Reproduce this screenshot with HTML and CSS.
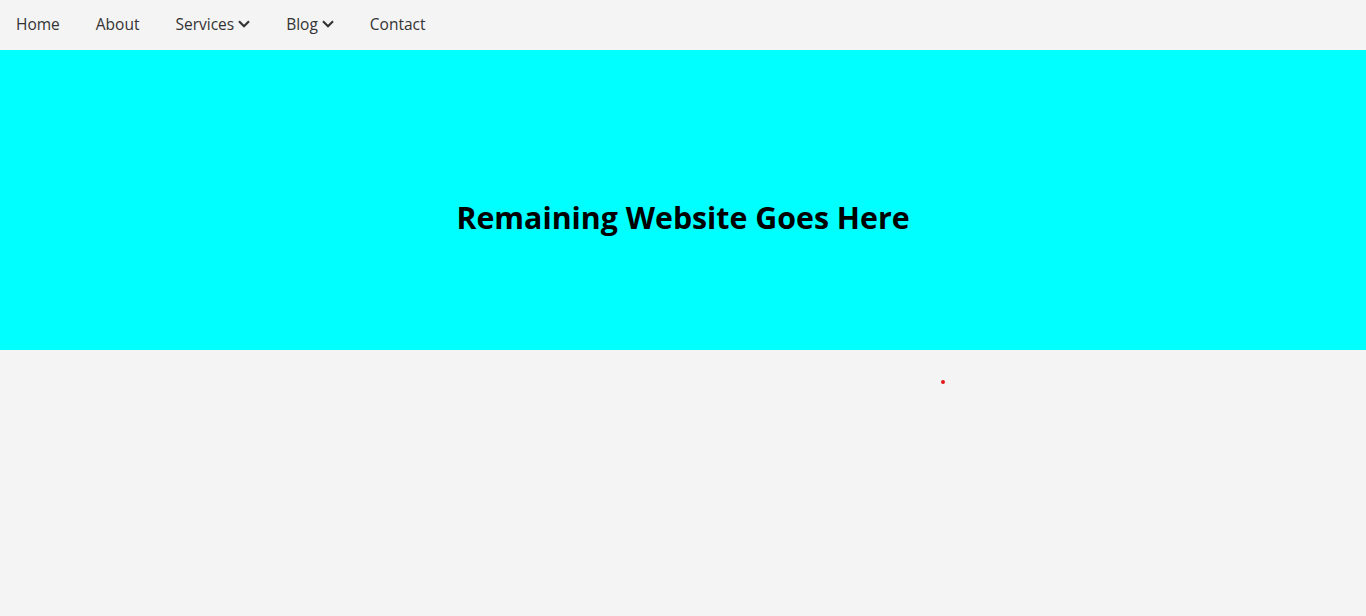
FILE: index.html
```html
<!DOCTYPE html>
<html>
<head>
<meta charset="utf-8">
<link rel="stylesheet" href="styles.css">
</head>
<body>
<nav class="nav">
  <a class="nav-item" href="#">Home</a>
  <a class="nav-item" href="#">About</a>
  <a class="nav-item" href="#">Services <svg class="chev" viewBox="0 0 12 8" width="12" height="8"><path d="M1 1.2 L6 6.2 L11 1.2" fill="none" stroke="#333" stroke-width="2.2"/></svg></a>
  <a class="nav-item" href="#">Blog <svg class="chev" viewBox="0 0 12 8" width="12" height="8"><path d="M1 1.2 L6 6.2 L11 1.2" fill="none" stroke="#333" stroke-width="2.2"/></svg></a>
  <a class="nav-item" href="#">Contact</a>
</nav>
<section class="hero">
  <h1 class="hero-title">Remaining Website Goes Here</h1>
</section>
<main class="rest">
  <span class="dot"></span>
</main>
</body>
</html>
```

FILE: styles.css
```css
html, body {
  margin: 0;
  padding: 0;
  background: #f4f4f4;
  font-family: "Open Sans", "Noto Sans", sans-serif;
}
.nav {
  height: 50px;
  box-sizing: border-box;
  padding-bottom: 2px;
  display: flex;
  align-items: center;
  padding-left: 16px;
  gap: 36px;
  background: #f4f4f4;
}
.nav-item {
  color: #333;
  text-decoration: none;
  font-size: 15.5px;
  display: flex;
  align-items: center;
  gap: 4px;
}
.chev {
  display: block;
}
.hero {
  height: 300px;
  background: #00ffff;
  display: flex;
  align-items: center;
  justify-content: center;
  padding-top: 34px;
  box-sizing: border-box;
}
.hero-title {
  margin: 0;
  font-size: 30.3px;
  font-weight: 700;
  color: #000;
}
.rest {
  position: relative;
  height: 266px;
}
.dot {
  position: absolute;
  left: 940.5px;
  top: 29.5px;
  width: 4px;
  height: 4px;
  border-radius: 50%;
  background: #e01818;
}
```
